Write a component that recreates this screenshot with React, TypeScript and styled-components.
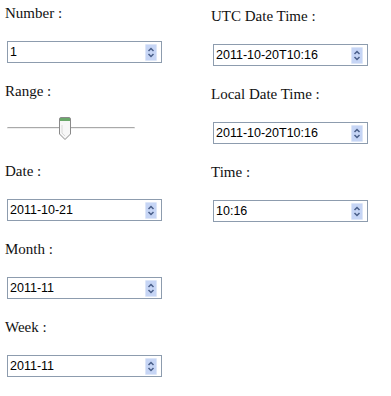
import React from "react";
import styled, { createGlobalStyle } from "styled-components";

const GlobalStyle = createGlobalStyle`
  html, body {
    margin: 0;
    padding: 0;
    background: #ffffff;
  }
`;

const Page = styled.div`
  display: flex;
  width: 391px;
  height: 396px;
  background: #ffffff;
`;

const Column = styled.div<{ $left: number; $top: number; $width: number }>`
  display: flex;
  flex-direction: column;
  width: ${(p) => p.$width}px;
  padding-left: ${(p) => p.$left}px;
  padding-top: ${(p) => p.$top}px;
  box-sizing: border-box;
`;

const Field = styled.div<{ $height?: number }>`
  display: flex;
  flex-direction: column;
  height: ${(p) => p.$height ?? 78}px;
`;

const Label = styled.div`
  font-family: "Liberation Serif", "Times New Roman", serif;
  font-size: 15px;
  line-height: 18px;
  height: 18px;
  margin-top: 4px;
  color: #111;
`;

const Box = styled.div`
  display: flex;
  align-items: center;
  width: 155px;
  height: 22px;
  margin-top: 19px;
  margin-left: 2px;
  box-sizing: border-box;
  border: 1px solid #8d9cae;
  padding: 1px 4px 1px 2px;
  background: #fff;
`;

const Value = styled.span`
  flex: 1;
  font-family: "Liberation Sans", Arial, sans-serif;
  font-size: 12.5px;
  color: #000;
  white-space: nowrap;
`;

const Spinner = styled.div`
  width: 12px;
  height: 17px;
  box-sizing: border-box;
  border: 1px solid #dde6f8;
  border-radius: 1px;
  background: #c6d5f5;
  display: flex;
  align-items: center;
  justify-content: center;
`;

const Slider = styled.div`
  position: relative;
  width: 128px;
  height: 22px;
  margin-top: 17px;
  margin-left: 2px;
`;

const Track = styled.div`
  position: absolute;
  left: 0;
  right: 0;
  top: 10px;
  height: 1px;
  background: #a9a9a9;
  border-left: 1px solid #c8c8c8;
  border-right: 1px solid #c8c8c8;
  box-shadow: 0 1px 0 #eeeeee;
`;

const Thumb = styled.svg`
  position: absolute;
  left: 52px;
  top: 0;
`;

function SpinIcon() {
  return (
    <svg width="8" height="13" viewBox="0 0 8 13">
      <path d="M1.5 5 L4 2.5 L6.5 5" fill="none" stroke="#4a5f8a" strokeWidth="1.5" />
      <path d="M1.5 8 L4 10.5 L6.5 8" fill="none" stroke="#4a5f8a" strokeWidth="1.5" />
    </svg>
  );
}

function Input({ value }: { value: string }) {
  return (
    <Box>
      <Value>{value}</Value>
      <Spinner>
        <SpinIcon />
      </Spinner>
    </Box>
  );
}

function Range() {
  return (
    <Slider>
      <Track />
      <Thumb width="12" height="23" viewBox="0 0 12 23">
        <path
          d="M0.5 2 Q0.5 0.5 2 0.5 L10 0.5 Q11.5 0.5 11.5 2 L11.5 17 L6 22.5 L0.5 17 Z"
          fill="#f7f7f7"
          stroke="#8a8a8a"
        />
        <rect x="1" y="1" width="10" height="3" fill="#6aa86a" />
        <path d="M3 8 L3 16 L6 19" fill="none" stroke="#d8d8d8" />
      </Thumb>
    </Slider>
  );
}

export default function App() {
  return (
    <Page>
      <GlobalStyle />
      <Column $left={5} $top={0} $width={211}>
        <Field>
          <Label>Number :</Label>
          <Input value="1" />
        </Field>
        <Field $height={80}>
          <Label>Range :</Label>
          <Range />
        </Field>
        <Field>
          <Label>Date :</Label>
          <Input value="2011-10-21" />
        </Field>
        <Field>
          <Label>Month :</Label>
          <Input value="2011-11" />
        </Field>
        <Field>
          <Label>Week :</Label>
          <Input value="2011-11" />
        </Field>
      </Column>
      <Column $left={0} $top={3} $width={180}>
        <Field>
          <Label>UTC Date Time :</Label>
          <Input value="2011-10-20T10:16" />
        </Field>
        <Field>
          <Label>Local Date Time :</Label>
          <Input value="2011-10-20T10:16" />
        </Field>
        <Field>
          <Label>Time :</Label>
          <Input value="10:16" />
        </Field>
      </Column>
    </Page>
  );
}
